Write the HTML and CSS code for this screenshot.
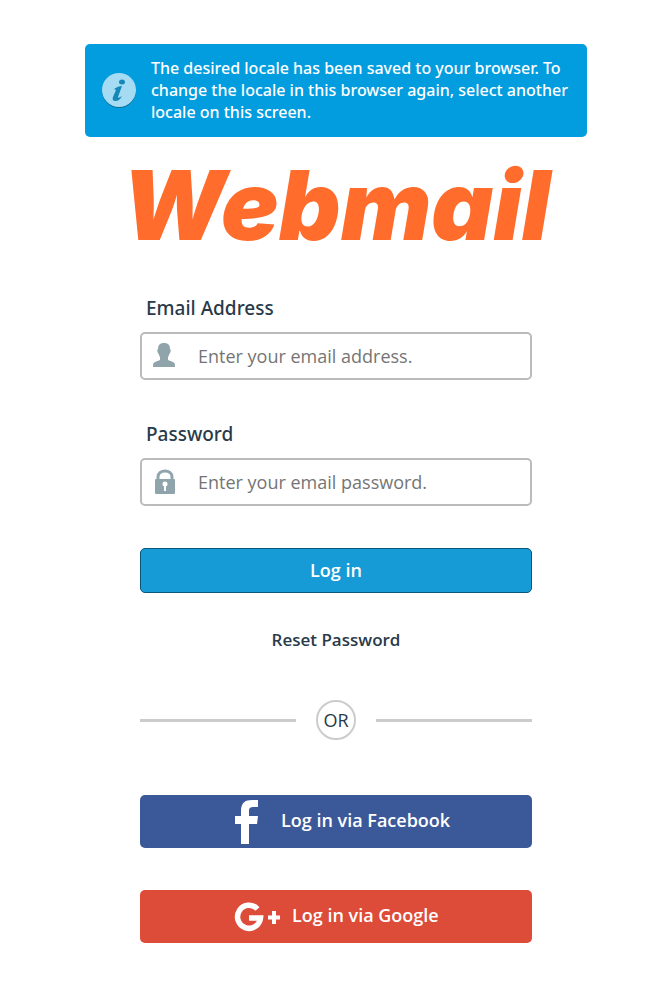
FILE: index.html
```html
<!DOCTYPE html>
<html lang="en">
<head>
    <meta charset="UTF-8">
    <meta name="viewport" content="width=device-width, initial-scale=1.0">
    <title>Webmail Login</title>
    <link rel="stylesheet" href="styles.css">
</head>
<body>
    <div class="notice" role="status">
        <svg class="notice-icon" viewBox="0 0 36 36" aria-hidden="true">
            <circle cx="18" cy="19" r="17" fill="#087099"/>
            <circle cx="18" cy="18" r="17" fill="#a5dcf4"/>
            <ellipse cx="21" cy="10" rx="3" ry="2.500" fill="#1688b8"/>
            <path d="M13 17c3-2 5-3 8-3l-4 11c0 1 1 1 4-1-2 4-4 5-7 5-2 0-3-2-2-4l3-7z" fill="#1688b8"/>
        </svg>
        <p class="notice-text">The desired locale has been saved to your browser. To change the locale in this browser again, select another locale on this screen.</p>
    </div>

    <main class="login">
        <h1 class="brand">Webmail</h1>

        <form class="login-form" onsubmit="return false">
            <label class="field-label" for="user">Email Address</label>
            <div class="field">
                <svg class="field-icon" viewBox="0 0 24 26" aria-hidden="true">
                    <path d="M12 0c4 0 6 2 6 6 1 1 1 2 0 4-1 1-1 3-2 4v3l5 2c2 1 2 2 2 5H1c0-3 0-4 2-5l5-2v-3c-1-1-1-3-2-4-1-2-1-3 0-4 0-4 2-6 6-6z" fill="#90a4ab"/>
                </svg>
                <input type="text" id="user" placeholder="Enter your email address.">
            </div>

            <label class="field-label" for="pass">Password</label>
            <div class="field">
                <svg class="field-icon" viewBox="0 0 24 26" aria-hidden="true">
                    <path d="M6 11V8c0-8 14-8 14 0v3" fill="none" stroke="#90a4ab" stroke-width="3"/>
                    <rect x="3" y="10" width="20" height="15" rx="1" fill="#90a4ab"/>
                    <circle cx="13" cy="15" r="2.500" fill="#fff"/>
                    <path d="M12 16h2v6h-2z" fill="#fff"/>
                </svg>
                <input type="password" id="pass" placeholder="Enter your email password.">
            </div>

            <button type="submit" class="login-btn">Log in</button>
        </form>

        <a href="#" class="reset-link">Reset Password</a>

        <div class="divider"><span>OR</span></div>

        <a href="#" class="social-btn facebook">
            <svg class="social-icon" viewBox="0 0 35 46" aria-hidden="true">
                <path d="M7 45V25H1v-8h6v-5C7 4 11 1 18 1h6v7h-4c-4 0-5 1-5 4v5h9l-1 8h-8v20z" fill="#fff"/>
            </svg>
            <span>Log in via Facebook</span>
        </a>
        <a href="#" class="social-btn google">
            <svg class="social-icon" viewBox="0 0 46 46" aria-hidden="true">
                <path d="M23.500 15A11.500 11.500 0 1 0 26.500 24H15" fill="none" stroke="#fff" stroke-width="5.500"/>
                <path d="M40 17v13M34 23.500h12" fill="none" stroke="#fff" stroke-width="4"/>
            </svg>
            <span>Log in via Google</span>
        </a>
    </main>
</body>
</html>
```

FILE: styles.css
```css
* {
    box-sizing: border-box;
}

body {
    margin: 0;
    padding: 44px 16px 20px 17px;
    background-color: #fff;
    color: #293a4a;
    font-family: "Open Sans", "Noto Sans", sans-serif;
    font-size: 18px;
}

.notice {
    display: flex;
    align-items: center;
    gap: 14px;
    max-width: 502px;
    margin: 0 auto;
    padding: 13px 16px 14px;
    border-radius: 5px;
    background-color: #029ddf;
    color: #fff;
}

.notice-icon {
    flex: none;
    width: 36px;
    height: 36px;
}

.notice-text {
    margin: 0;
    font-family: "Noto Sans", "Open Sans", sans-serif;
    font-size: 16px;
    font-weight: 500;
    line-height: 22px;
}

.login {
    display: flex;
    flex-direction: column;
    max-width: 392px;
    margin: 0 auto;
}

.brand {
    align-self: center;
    margin: 20px 0 42px;
    color: #ff6c2c;
    font-family: Inter, "Liberation Sans", sans-serif;
    font-size: 96px;
    font-style: italic;
    font-weight: 900;
    line-height: 96px;
}

.login-form {
    display: flex;
    flex-direction: column;
}

.field-label {
    padding-left: 6px;
    margin-bottom: 11px;
    font-family: "Noto Sans", "Open Sans", sans-serif;
    font-size: 19px;
    font-weight: 500;
    line-height: 26px;
}

.field {
    display: flex;
    align-items: center;
    height: 48px;
    margin-bottom: 41px;
    padding-left: 10px;
    border: 2px solid #bbb;
    border-radius: 5px;
}

.field-icon {
    flex: none;
    width: 24px;
    height: 26px;
}

.field input {
    flex: 1;
    min-width: 0;
    height: 44px;
    padding: 0 10px 0 22px;
    border: 0;
    background: none;
    color: #293a4a;
    font: inherit;
}

.field input::placeholder {
    color: #757575;
}

.login-btn {
    height: 45px;
    margin-top: 1px;
    padding-bottom: 3px;
    border: 1px solid #095779;
    border-radius: 5px;
    background-color: #179bd7;
    color: #fff;
    font: inherit;
    font-weight: 600;
    cursor: pointer;
}

.reset-link {
    align-self: center;
    margin: 34px 0 47px;
    color: #293a4a;
    font-size: 17px;
    font-weight: 600;
    line-height: 26px;
    text-decoration: none;
}

.divider {
    display: flex;
    align-items: center;
    gap: 20px;
    margin-bottom: 55px;
}

.divider::before,
.divider::after {
    content: "";
    flex: 1;
    height: 3px;
    background-color: #ccc;
}

.divider span {
    width: 40px;
    height: 40px;
    border: 2px solid #ccc;
    border-radius: 50%;
    line-height: 36px;
    text-align: center;
}

.social-btn {
    display: flex;
    align-items: center;
    height: 53px;
    margin-bottom: 42px;
    padding: 0 94px;
    border-radius: 5px;
    color: #fff;
    font-weight: 600;
    line-height: 24px;
    text-decoration: none;
    white-space: nowrap;
}

.social-icon {
    flex: none;
    height: 46px;
}

.facebook {
    background-color: #3b5998;
}

.google {
    background-color: #dd4b39;
}

.social-btn span {
    margin-left: 12px;
    padding-bottom: 3px;
}
```
